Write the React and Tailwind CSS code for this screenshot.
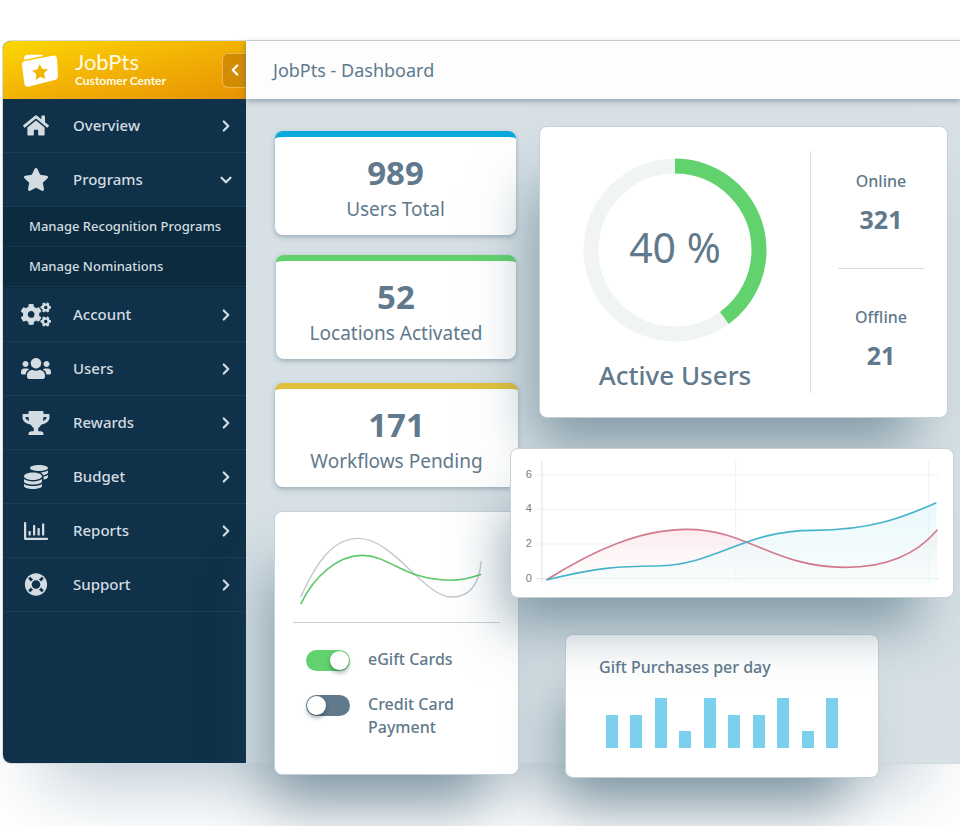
import { useState } from "react";
import { ChevronDown, ChevronLeft, ChevronRight } from "lucide-react";
import {
  FaCogs,
  FaCoins,
  FaHome,
  FaLifeRing,
  FaRegChartBar,
  FaStar,
  FaTrophy,
  FaUsers,
} from "react-icons/fa";

const menu = [
  { label: "Overview", icon: FaHome, size: 23 },
  {
    label: "Programs",
    icon: FaStar,
    size: 23,
    children: ["Manage Recognition Programs", "Manage Nominations"],
  },
  { label: "Account", icon: FaCogs, size: 25 },
  { label: "Users", icon: FaUsers, size: 25 },
  { label: "Rewards", icon: FaTrophy, size: 24 },
  { label: "Budget", icon: FaCoins, size: 24 },
  { label: "Reports", icon: FaRegChartBar, size: 24 },
  { label: "Support", icon: FaLifeRing, size: 23 },
];

const purchases = [2, 2, 3, 1, 3, 2, 2, 3, 1, 3];

const floating =
  "rounded-lg bg-white border border-[#c6d1d8] shadow-[-20px_44px_54px_-16px_rgba(58,92,110,0.54)]";

const Logo = () => (
  <svg viewBox="62 66 114 104" className="w-[38px] shrink-0" aria-hidden="true">
    <path
      d="M80 71 H122 Q130 71 127 74 L124 76 L72 86 Q69 86 71 81 Q73 71 80 71Z"
      fill="#fff"
    />
    <path
      d="M75 90 L157 74 Q169 72 170 84 L173 134 Q173 144 163 147 L84 167 Q74 168 72 158 L65 102 Q64 92 75 90Z"
      fill="#fff"
    />
    <path
      d="M118 99 L126 114 L143 115 L131 127 L135 144 L120 137 L106 147 L108 129 L95 119 L112 115Z"
      fill="#f2b705"
    />
  </svg>
);

const Sidebar = () => {
  const [open, setOpen] = useState("Programs");

  return (
    <aside className="w-[243px] shrink-0 rounded-l-lg bg-[#0f3149] text-[#d3dce1]">
      <div className="flex h-[58px] items-center rounded-tl-lg bg-gradient-to-br from-[#fcd703] via-[#f2b205] to-[#e69202] pl-[18px]">
        <Logo />
        <div className="ml-4 flex-1 pb-1 font-[family-name:Lato,sans-serif] text-[#fffbe6]">
          <p className="text-[22px] leading-[25px]">JobPts</p>
          <p className="text-xs leading-[14px] font-bold">Customer Center</p>
        </div>
        <button
          aria-label="Collapse menu"
          className="flex h-[35px] w-6 items-center justify-center rounded-l-md border border-r-0 border-[#f0b84a] bg-[#d28c04] text-white"
        >
          <ChevronLeft size={18} strokeWidth={3} />
        </button>
      </div>
      <nav>
        <ul>
          {menu.map(({ label, icon: Icon, size, children }) => {
            const isOpen = open === label && children;
            return (
              <li key={label}>
                <button
                  onClick={() => setOpen(isOpen ? "" : label)}
                  className="flex h-[54px] w-full items-center border-b border-[#1b3e56] pr-[11px] pl-[18px] text-left"
                >
                  <Icon className="w-[30px]" size={size} />
                  <span className="ml-[22px] flex-1 text-[15px] font-medium">{label}</span>
                  {isOpen ? (
                    <ChevronDown size={18} strokeWidth={3} />
                  ) : (
                    <ChevronRight size={18} strokeWidth={3} />
                  )}
                </button>
                {isOpen && (
                  <ul className="bg-[#0c2b3e] pb-px">
                    {children.map((child) => (
                      <li key={child} className="border-b border-[#14384d]">
                        <a
                          href="#"
                          className="block pl-[26px] text-[13px] leading-[39px] font-medium"
                        >
                          {child}
                        </a>
                      </li>
                    ))}
                  </ul>
                )}
              </li>
            );
          })}
        </ul>
      </nav>
    </aside>
  );
};

const StatCard = ({ value, label, className }) => (
  <div
    className={`rounded-lg border-t-[6px] bg-white pt-[15px] pb-[11px] text-center shadow-[0_2px_5px_rgba(62,94,114,0.4)] ${className}`}
  >
    <p className="text-[33px] leading-[42px] font-bold">{value}</p>
    <p className="text-[19px] leading-[30px]">{label}</p>
  </div>
);

const Toggle = ({ label, defaultChecked }) => (
  <label className="flex items-start gap-[18px] leading-[23px] font-medium">
    <input
      type="checkbox"
      defaultChecked={defaultChecked}
      className="mt-[2px] h-[21px] w-11 shrink-0 appearance-none rounded-full bg-[#60798c] p-px before:block before:size-[19px] before:rounded-full before:bg-white before:shadow-[0_3px_4px_rgba(20,50,60,0.4)] checked:bg-[#61d26e] checked:before:translate-x-[23px]"
    />
    {label}
  </label>
);

const PaymentsCard = () => (
  <div className={`mt-6 h-[264px] px-[18px] pt-[18px] ${floating}`}>
    <svg viewBox="100 480 618 240" className="w-full" fill="none">
      <path
        d="M123 680 C170 575 220 505 295 505 C400 505 490 680 575 680 C635 680 657 630 662 573"
        stroke="#c3c8cd"
        strokeWidth="4"
      />
      <path
        d="M123 701 C165 615 235 556 307 556 C390 556 430 629 570 630 C605 630 640 620 662 612"
        stroke="#5fc96b"
        strokeWidth="5"
      />
    </svg>
    <div className="mt-3 space-y-[22px] border-t border-[#c9d2d6] px-[13px] pt-[25px]">
      <Toggle label="eGift Cards" defaultChecked />
      <Toggle label="Credit Card Payment" />
    </div>
  </div>
);

const ActiveUsers = () => (
  <section className={`relative z-10 flex h-[292px] py-6 ${floating}`}>
    <div className="flex flex-1 flex-col items-center pt-[7px]">
      <div className="grid place-items-center">
        <svg viewBox="0 0 184 184" className="col-start-1 row-start-1 w-[184px] -rotate-90">
          <circle cx="92" cy="92" r="84" fill="none" stroke="#f0f4f5" strokeWidth="15" />
          <circle
            cx="92"
            cy="92"
            r="84"
            fill="none"
            stroke="#61d26e"
            strokeWidth="15"
            pathLength="100"
            strokeDasharray="40 60"
          />
        </svg>
        <p className="col-start-1 row-start-1 pb-[6px] text-[41px] leading-[50px]">40 %</p>
      </div>
      <h2 className="mt-[15px] text-[26px] leading-9 font-medium">Active Users</h2>
    </div>
    <div className="flex w-[137px] flex-col items-center border-l border-[#d9dde1] pl-1 text-center">
      <div className="pt-[18px] pb-[31px]">
        <p className="leading-6 font-medium">Online</p>
        <p className="mt-2 text-[25px] leading-9 font-bold">321</p>
      </div>
      <div className="w-[86px] border-t border-[#d9dde1] pt-9">
        <p className="leading-6 font-medium">Offline</p>
        <p className="mt-2 text-[25px] leading-9 font-bold">21</p>
      </div>
    </div>
  </section>
);

const TrendChart = () => (
  <section className={`relative z-10 mt-[30px] -mr-[6px] -ml-[29px] h-[150px] px-[6px] pt-px ${floating}`}>
    <svg viewBox="50 60 1290 408" className="w-full">
      <defs>
        <linearGradient id="pink" x1="0" y1="0" x2="0" y2="1">
          <stop offset="0" stopColor="#f9dbe4" stopOpacity="0.6" />
          <stop offset="1" stopColor="#fff6f2" stopOpacity="0.2" />
        </linearGradient>
        <linearGradient id="blue" x1="0" y1="0" x2="0" y2="1">
          <stop offset="0" stopColor="#d9f4f9" stopOpacity="0.6" />
          <stop offset="1" stopColor="#f4fcfd" stopOpacity="0.5" />
        </linearGradient>
      </defs>
      <g stroke="#f0f1f2" strokeWidth="3">
        <path d="M108 135H1316M108 238H1316M108 342H1316M706 93V458M1285 93V458" />
        <path d="M125 93V458M108 446H1316" stroke="#dfe1e3" />
      </g>
      <g fill="#7b7b7b" fontFamily="Liberation Sans, sans-serif" fontSize="33">
        <text x="76" y="144">6</text>
        <text x="76" y="247">4</text>
        <text x="76" y="351">2</text>
        <text x="76" y="456">0</text>
      </g>
      <path
        d="M138 450 C280 360 420 298 560 298 C740 298 820 412 1035 412 C1180 412 1260 360 1311 299 V446 H138Z"
        fill="url(#pink)"
      />
      <path
        d="M138 450 C300 410 360 409 470 408 C650 405 730 300 940 301 C1110 301 1210 262 1308 218 V464 H138Z"
        fill="url(#blue)"
      />
      <path
        d="M138 450 C280 360 420 298 560 298 C740 298 820 412 1035 412 C1180 412 1260 360 1311 299"
        fill="none"
        stroke="#d27a8d"
        strokeWidth="5"
      />
      <path
        d="M138 450 C300 410 360 409 470 408 C650 405 730 300 940 301 C1110 301 1210 262 1308 218"
        fill="none"
        stroke="#45b4cb"
        strokeWidth="5"
      />
    </svg>
  </section>
);

const GiftPurchases = () => (
  <section className={`mt-9 ml-[26px] h-[144px] w-[314px] px-[33px] pt-5 ${floating}`}>
    <h2 className="leading-6 font-medium">Gift Purchases per day</h2>
    <div className="mt-[19px] flex items-end justify-between px-[7px]">
      {purchases.map((count, idx) => (
        <div
          key={idx}
          className="w-3 bg-[#7bd1ed]"
          style={{ height: Math.round(count * 16.6) }}
        />
      ))}
    </div>
  </section>
);

const App = () => {
  return (
    <div className="min-h-screen overflow-hidden bg-white pt-[41px] pb-12 pl-[3px] font-[family-name:'Noto_Sans',sans-serif] text-[#60798c]">
      <div className="flex rounded-l-lg shadow-[0_0_0_1px_#d3dbdf,0_60px_70px_-40px_rgba(80,115,140,0.4)]">
        <Sidebar />
        <main className="min-w-0 flex-1 bg-[#d6e0e5]">
          <header className="flex h-[58px] items-center bg-[#fdfdfe] pl-[27px] shadow-[0_2px_6px_rgba(62,94,114,0.5)]">
            <h1 className="text-[18px]">JobPts - Dashboard</h1>
          </header>
          <div className="-mb-[15px] flex gap-5 pt-[27px] pr-3 pl-7">
            <div className="w-[245px] shrink-0 pt-[5px]">
              <StatCard value="989" label="Users Total" className="mr-[3px] ml-px border-[#0aa9dd]" />
              <StatCard value="52" label="Locations Activated" className="mt-5 mr-[3px] ml-[2px] border-[#61d26e]" />
              <StatCard value="171" label="Workflows Pending" className="mx-px mt-6 border-[#e0c13e]" />
              <PaymentsCard />
            </div>
            <div className="min-w-0 flex-1">
              <ActiveUsers />
              <TrendChart />
              <GiftPurchases />
            </div>
          </div>
        </main>
      </div>
    </div>
  );
};

export default App;
